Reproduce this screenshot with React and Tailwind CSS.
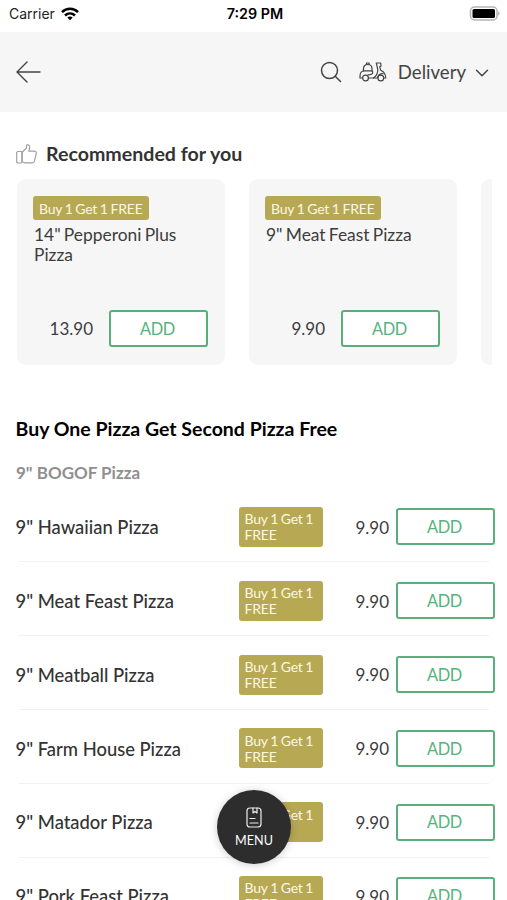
import { ChevronDown } from 'lucide-react';

const recommended = [
  { name: '14" Pepperoni Plus Pizza', price: '13.90' },
  { name: '9" Meat Feast Pizza', price: '9.90' },
];

const pizzas = [
  { name: '9" Hawaiian Pizza', price: '9.90' },
  { name: '9" Meat Feast Pizza', price: '9.90' },
  { name: '9" Meatball Pizza', price: '9.90' },
  { name: '9" Farm House Pizza', price: '9.90' },
  { name: '9" Matador Pizza', price: '9.90' },
  { name: '9" Pork Feast Pizza', price: '9.90' },
];

function AddButton() {
  return (
    <button className="h-[37px] w-[99px] shrink-0 rounded-[3px] border-2 border-[#5aae7c] bg-white pr-[2px] pt-px text-[16.4px] leading-none tracking-[-0.4px] text-[#54b37d]">
      ADD
    </button>
  );
}

function StatusBar() {
  return (
    <div className="grid h-8 grid-cols-3 items-center bg-white pb-[5px] pl-[9px] pr-[7px] font-['Inter','Liberation_Sans',sans-serif]">
      <div className="flex items-center gap-[6px]">
        <span className="text-[14px] text-[#222]">Carrier</span>
        <svg className="h-[14px] w-[18px]" viewBox="0 0 18 14" fill="none" stroke="#000" strokeWidth="2.5">
          <path d="M1 5.2C5.5.7 12.5.7 17 5.2" />
          <path d="M4 8.5c2.9-2.8 7.1-2.8 10 0" />
          <path d="M6.3 10.6c1.6-1.500 3.800-1.500 5.400 0L9 13.300z" fill="#000" stroke="none" />
        </svg>
      </div>
      <span className="pl-px text-center text-[14.3px] font-semibold text-black">7:29 PM</span>
      <svg className="h-[15px] w-[31px] justify-self-end" viewBox="0 0 31 15">
        <rect x="1.500" y="1" width="26.500" height="13" rx="4" fill="#fff" stroke="#b5b5b5" strokeWidth="1.500" />
        <rect x="3.500" y="3" width="22.500" height="9" rx="1.500" fill="#000" />
        <path d="M29.200 5.300c1.800.8 1.800 3.600 0 4.400z" fill="#aaa" />
      </svg>
    </div>
  );
}

function Header() {
  return (
    <header className="flex h-20 items-center bg-[#f6f6f6] pl-4 pr-[14px] text-[#444]">
      <svg className="h-[22px] w-[25px]" viewBox="0 0 25 22" fill="none" stroke="currentColor" strokeWidth="1.400" strokeLinecap="round">
        <path d="M1 11h23M11 1L1 11l10 10" />
      </svg>
      <svg className="ml-auto h-[22px] w-[22px]" viewBox="0 0 22 22" fill="none" stroke="currentColor" strokeWidth="1.500" strokeLinecap="round">
        <circle cx="9.500" cy="9.500" r="8" />
        <path d="M15.200 15.200l5.300 5.300" />
      </svg>
      {/* scooter */}
      <svg className="ml-[17px] h-5 w-[28px]" viewBox="0 0 28 20" fill="none" stroke="currentColor" strokeWidth="1.200" strokeLinecap="round" strokeLinejoin="round">
        <path d="M4.500 8.800V6.500C4.500 4 6.300 2.500 8.700 2.500S13 4 13 6.500v2.300" />
        <path d="M7.500 2.500V1h2.600v1.500" />
        <path d="M3.500 16H1v-2c0-2.700 1.600-5.200 4-5.200h7.500c1.300 0 1.500 1.700.9 2.700-.7 1.200-2.200 1.400-4.400 1.400" />
        <path d="M9.500 16h9.200c.2-2.700 2-4.300 5.300-4.300" />
        <path d="M14.500 16c2.500-1.800 4.300-5 4.300-8.300L17.300 1h4.400l.3 3-1.300.8 1 3.400c3 1.200 5 3.800 5 7.800h-2" />
        <circle cx="6.500" cy="16" r="2.900" />
        <circle cx="21.800" cy="16" r="2.900" />
      </svg>
      <span className="ml-[11px] pt-[2px] text-[18.6px]">Delivery</span>
      <ChevronDown className="ml-[5px] mt-[2px] h-[22px] w-[22px]" strokeWidth={1.6} />
    </header>
  );
}

function RecommendedCard({ item }) {
  return (
    <div className="flex h-[186px] w-[208px] shrink-0 flex-col rounded-[9px] bg-[#f6f6f6] pb-[18px] pl-4 pr-[17px] pt-[17px]">
      <span className="h-6 self-start rounded-[3px] bg-[#b7a854] px-[6px] text-[14px] leading-[25px] tracking-[-0.2px] text-[#fcf8e3] [word-spacing:-0.7px]">
        Buy 1 Get 1 FREE
      </span>
      <p className="mt-[5px] w-[160px] pl-[1px] text-[17.4px] leading-5 text-[#3c3c3c] [word-spacing:-1.2px]">{item.name}</p>
      <div className="mt-auto flex items-center justify-end gap-4">
        <span className="text-[17px] text-[#3c3c3c]">{item.price}</span>
        <AddButton />
      </div>
    </div>
  );
}

function PizzaRow({ item }) {
  return (
    <li className="ml-[15.5px] mr-3 h-[73.8px]">
      <div className="flex h-[72.800px] items-center pt-[4px]">
        <span className="w-[223px] pt-[2px] text-[18.4px] font-medium text-[#333]">{item.name}</span>
        <span className="h-10 w-[84px] rounded-[3px] bg-[#b7a854] px-[6px] pt-[4.500px] text-[14px] leading-4 tracking-[-0.2px] text-[#fcf8e3] [word-spacing:-0.7px]">
          Buy 1 Get 1 FREE
        </span>
        <span className="ml-auto mr-[7px] pt-px text-[17px] text-[#3c3c3c]">{item.price}</span>
        <AddButton />
      </div>
      <div className="ml-[3px] mr-[6px] h-px bg-[#f1f1f1]" />
    </li>
  );
}

function App() {
  return (
    <div className="relative h-[900px] w-[507px] overflow-hidden bg-white font-['Lato',sans-serif]">
      <StatusBar />
      <Header />

      <section className="pt-[30px]">
        <div className="flex h-6 items-center gap-[9px] pl-4">
          <svg className="h-5 w-[21px]" viewBox="0 0 21 20" fill="none" stroke="#a0a0a0" strokeWidth="1.200" strokeLinejoin="round">
            <path d="M6 8.500L10.500 4V1.600c0-1.400 3.200-1.200 3.200 1.400 0 1.700-.7 3-.9 4.200h5.400c1.600 0 2.300 1.200 2 2.500l-1.700 7.100c-.3 1.300-1.100 2-2.400 2H9c-1.400 0-2-.6-3-1.400z" />
            <path d="M6 7.500H2C1.300 7.500.7 8 .7 8.800v8.900c0 .8.600 1.300 1.300 1.300h2.700c.8 0 1.300-.5 1.300-1.300z" />
          </svg>
          <h2 className="text-[19.6px] font-bold text-[#333]">Recommended for you</h2>
        </div>
        <div className="ml-[17px] mr-[15px] mt-[13px] flex gap-6 overflow-hidden">
          {recommended.map((item) => (
            <RecommendedCard key={item.name} item={item} />
          ))}
          <div className="h-[186px] w-[208px] shrink-0 rounded-[9px] bg-[#f6f6f6]" />
        </div>
      </section>

      <section className="pt-[52px]">
        <h2 className="pl-[15.5px] text-[19.500px] font-bold leading-6 text-black">Buy One Pizza Get Second Pizza Free</h2>
        <h3 className="mt-5 pl-4 text-[17px] font-bold leading-6 text-[#909090]">9" BOGOF Pizza</h3>
        <ul className="mt-[3.6px]">
          {pizzas.map((item) => (
            <PizzaRow key={item.name} item={item} />
          ))}
        </ul>
      </section>

      {/* floating menu button */}
      <button className="absolute left-[217px] top-[790px] flex h-[74px] w-[74px] flex-col items-center rounded-full bg-[#2d2d2d] pt-[17px] text-white shadow-[0_1px_8px_rgba(0,0,0,0.2)]">
        <svg className="h-[21px] w-4" viewBox="0 0 16 21" fill="none" stroke="#eee" strokeWidth="1.200" strokeLinecap="round" strokeLinejoin="round">
          <path d="M4 1h8c2 0 3 1 3 3v13c0 2-1 3-3 3H4c-2 0-3-1-3-3V4c0-2 1-3 3-3z" />
          <path d="M7 1v5l2-1.500L11 6V1M4 11.500h5M4 16h8" />
        </svg>
        <span className="mt-[5px] text-[12.6px] leading-4">MENU</span>
      </button>
    </div>
  );
}

export default App;
